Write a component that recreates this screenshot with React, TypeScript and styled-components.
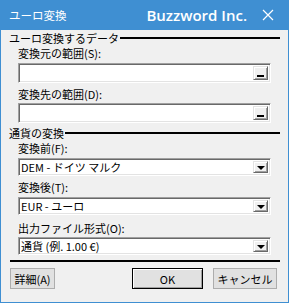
import styled, { createGlobalStyle } from "styled-components";

const GlobalStyle = createGlobalStyle`
  html, body {
    margin: 0;
    padding: 0;
    background: #f0f0f0;
  }
  body {
    font-family: "Noto Sans CJK JP", "Noto Sans", sans-serif;
    font-size: 11px;
    color: #000;
  }
`;

const Window = styled.div`
  width: 289px;
  height: 303px;
  box-sizing: border-box;
  display: flex;
  flex-direction: column;
  background: #f0f0f0;
  border: 1px solid #3f8fd2;
  border-top: none;
`;

const TitleBar = styled.div`
  height: 30px;
  margin: 0 -1px;
  display: flex;
  align-items: center;
  background: #3f8fd2;
  color: #fff;
  padding: 0 0 0 9px;
`;

const Caption = styled.span`
  font-size: 11.5px;
`;

const Brand = styled.span`
  margin-left: auto;
  font-family: "Open Sans", "Noto Sans", sans-serif;
  font-weight: 600;
  font-size: 15px;
`;

const CloseBox = styled.span`
  width: 42px;
  display: flex;
  justify-content: center;
  align-items: center;
`;

const Body = styled.div`
  display: flex;
  flex-direction: column;
  padding: 1px 8px 0 7px;
`;

const GroupHeader = styled.div<{ $top: number }>`
  display: flex;
  align-items: center;
  height: 14px;
  margin-top: ${(p) => p.$top}px;
  line-height: 14px;
  padding-left: 1px;

  &::after {
    content: "";
    flex: 1;
    height: 2px;
    background: #000;
    margin-left: 1px;
  }
`;

const Label = styled.div<{ $top: number }>`
  height: 14px;
  line-height: 14px;
  margin: ${(p) => p.$top}px 0 0 10px;
`;

const Sunken = styled.div<{ $top: number; $h: number }>`
  margin: ${(p) => p.$top}px 9px 0 10px;
  height: ${(p) => p.$h}px;
  box-sizing: border-box;
  background: #fff;
  display: flex;
  align-items: center;
  padding: 2px;
  border-top: 1px solid #a0a0a0;
  border-left: 1px solid #a0a0a0;
  border-bottom: 1px solid #fff;
  border-right: 1px solid #fff;
  box-shadow: inset 1px 1px #696969, inset -1px -1px #e3e3e3;
`;

const FieldText = styled.span`
  flex: 1;
  white-space: nowrap;
  line-height: 14px;
`;

const SideButton = styled.span`
  width: 15px;
  align-self: stretch;
  box-sizing: border-box;
  background: #f0f0f0;
  display: flex;
  align-items: center;
  justify-content: center;
  border-top: 1px solid #e3e3e3;
  border-left: 1px solid #e3e3e3;
  border-bottom: 1px solid #696969;
  border-right: 1px solid #696969;
  box-shadow: inset 1px 1px #fff, inset -1px -1px #a0a0a0;
`;

const Underscore = styled.span`
  width: 7px;
  height: 2px;
  background: #000;
  margin-top: 6px;
`;

const Arrow = styled.span`
  width: 0;
  height: 0;
  border-left: 4px solid transparent;
  border-right: 4px solid transparent;
  border-top: 4px solid #000;
  margin-top: 1px;
`;

const Separator = styled.div`
  height: 2px;
  background: #000;
  margin: 5px 0 0 2px;
`;

const ButtonRow = styled.div`
  display: flex;
  gap: 10px;
  margin: 6px 3px 0 2px;
`;

const Btn = styled.button<{ $w: number; $default?: boolean }>`
  width: ${(p) => p.$w}px;
  height: 21px;
  padding: 0;
  font-family: "Noto Sans CJK JP", "Noto Sans", sans-serif;
  font-size: 11px;
  color: #000;
  background: #e1e1e1;
  border: 1px solid ${(p) => (p.$default ? "#000" : "#adadad")};
  box-shadow: ${(p) =>
    p.$default ? "inset 1px 1px #fff, inset -1px -1px #a0a0a0" : "none"};
  display: flex;
  align-items: center;
  justify-content: center;
`;

const Spacer = styled.div`
  flex: 1;
`;

export default function App() {
  return (
    <>
      <GlobalStyle />
      <Window>
        <TitleBar>
          <Caption>ユーロ変換</Caption>
          <Brand>Buzzword Inc.</Brand>
          <CloseBox>
            <svg width="12" height="12" viewBox="0 0 12 12">
              <path d="M1 1 L11 11 M11 1 L1 11" stroke="#fff" strokeWidth="1.2" />
            </svg>
          </CloseBox>
        </TitleBar>
        <Body>
          <GroupHeader $top={0}>ユーロ変換するデータ</GroupHeader>
          <Label $top={1}>変換元の範囲(S):</Label>
          <Sunken $top={3} $h={20}>
            <FieldText />
            <SideButton>
              <Underscore />
            </SideButton>
          </Sunken>
          <Label $top={4}>変換先の範囲(D):</Label>
          <Sunken $top={2} $h={20}>
            <FieldText />
            <SideButton>
              <Underscore />
            </SideButton>
          </Sunken>
          <GroupHeader $top={3}>通貨の変換</GroupHeader>
          <Label $top={1}>変換前(F):</Label>
          <Sunken $top={3} $h={18}>
            <FieldText>DEM - ドイツ マルク</FieldText>
            <SideButton>
              <Arrow />
            </SideButton>
          </Sunken>
          <Label $top={4}>変換後(T):</Label>
          <Sunken $top={3} $h={18}>
            <FieldText>EUR - ユーロ</FieldText>
            <SideButton>
              <Arrow />
            </SideButton>
          </Sunken>
          <Label $top={6}>出力ファイル形式(O):</Label>
          <Sunken $top={2} $h={18}>
            <FieldText>通貨 (例. 1.00 €)</FieldText>
            <SideButton>
              <Arrow />
            </SideButton>
          </Sunken>
          <Separator />
          <ButtonRow>
            <Btn $w={45}>詳細(A)</Btn>
            <Spacer />
            <Btn $w={71} $default>
              OK
            </Btn>
            <Btn $w={64}>キャンセル</Btn>
          </ButtonRow>
        </Body>
      </Window>
    </>
  );
}
